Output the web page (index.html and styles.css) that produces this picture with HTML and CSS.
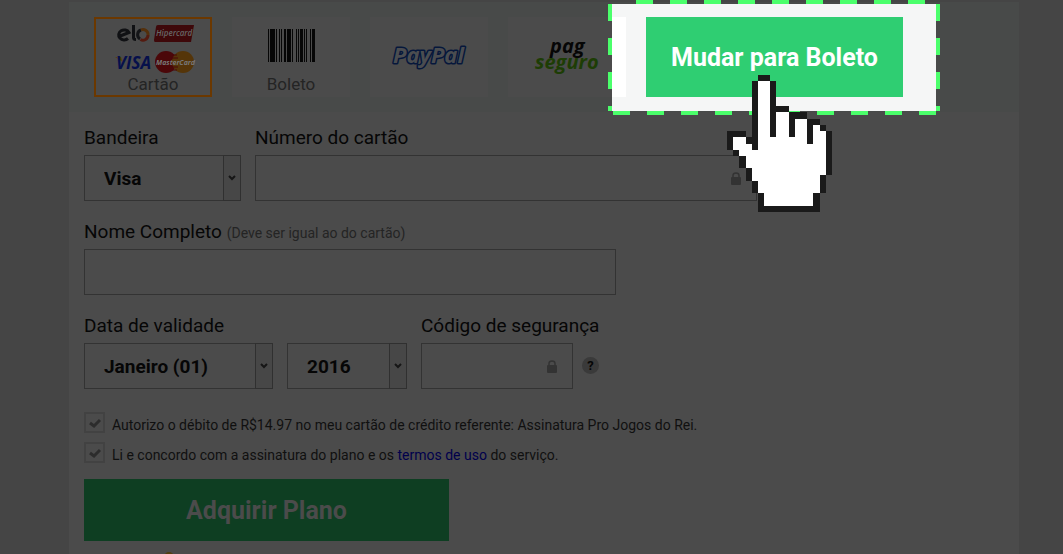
FILE: index.html
```
<!DOCTYPE html>
<html lang="pt-BR">
<head>
<meta charset="utf-8">
<title>Pagamento</title>
<link rel="stylesheet" href="styles.css">
</head>
<body>
<main class="panel">
  <nav class="methods" aria-label="Forma de pagamento">
    <button type="button" class="method method-active">
      <svg class="brands" viewBox="0 0 80 50" aria-hidden="true">
        <g fill="none" stroke-width="3">
          <path d="M4 12.500L14 8.500A5.500 5 0 1 0 13 14.500" stroke="#101114"/>
          <path d="M18.500 1V13.500Q18.500 15.500 21 15.500" stroke="#101114"/>
          <path d="M25 15A5 5 0 0 1 26 6" stroke="#141518"/>
          <path d="M26 6A5 5 0 0 1 33 11" stroke="#54300c"/>
          <path d="M33 11A5 5 0 0 1 25.500 15.500" stroke="#541b10"/>
        </g>
        <path d="M43 1H79L76 18H40Q39 18 39 16L41 3Q41 1 43 1Z" fill="#3e080a"/>
        <text x="41" y="12" class="t-hiper">Hipercard</text>
        <path d="M0 33H6L8 38Z" fill="#58420c"/>
        <text x="1" y="45" class="t-visa">VISA</text>
        <circle cx="51" cy="38" r="11" fill="#4b0709"/>
        <circle cx="68" cy="38" r="11" fill="#553509"/>
        <path d="M57 31H62M56 34H63M56 43H63M57 46H62" stroke="#4b0709"/>
        <text x="41" y="41" class="t-master">MasterCard</text>
      </svg>
      <span>Cartão</span>
    </button>
    <button type="button" class="method">
      <svg class="barcode" viewBox="0 0 47 33" aria-hidden="true">
        <path fill="#060606" d="M0 0h1v33h-1zM2 0h5v33h-5zM8 0h1v33h-1zM11 0h1v33h-1zM13 0h1v33h-1zM16 0h2v33h-2zM19 0h4v33h-4zM24 0h1v33h-1zM28 0h1v33h-1zM30 0h1v33h-1zM32 0h3v33h-3zM36 0h1v33h-1zM38 0h1v33h-1zM42 0h1v33h-1zM44 0h3v33h-3z"/>
      </svg>
      <span>Boleto</span>
    </button>
    <button type="button" class="method" aria-label="PayPal">
      <svg class="paypal" viewBox="0 0 76 28" aria-hidden="true">
        <text x="2" y="20" class="t-paypal">PayPal</text>
      </svg>
    </button>
    <button type="button" class="method" aria-label="PagSeguro">
      <svg class="pagseguro" viewBox="0 0 70 38" aria-hidden="true">
        <text class="t-pag"><tspan x="18" y="15">pag</tspan><tspan x="3" y="31" class="t-seguro">seguro</tspan></text>
      </svg>
    </button>
    <div class="spot">
      <div class="spot-frame"><div class="spot-tile"></div></div>
      <button type="button" class="switch">Mudar para Boleto</button>
      <svg class="hand" viewBox="0 0 17 22" preserveAspectRatio="none" shape-rendering="crispEdges" aria-hidden="true">
        <path fill="#fff" d="M5 1H7V6H10V7H13V8H15V9H16V16H15V19H14V21H6V19H5V17H4V15H3V13H2V12H1V10H3V11H4V12H5Z"/>
        <path fill="#1a1a1a" d="M5 0h2v1h-2zM4 1h1v11h-1zM7 1h1v9h-1zM8 5h2v1h-2zM10 6h3v1h-3zM10 7h1v3h-1zM13 7h2v1h-2zM13 8h1v3h-1zM15 8h1v1h-1zM16 9h1v7h-1zM15 16h1v3h-1zM14 19h1v3h-1zM5 21h9v1h-9zM5 19h1v2h-1zM4 17h1v2h-1zM3 15h1v2h-1zM2 13h1v2h-1zM1 12h1v1h-1zM0 9h1v3h-1zM1 9h2v1h-2zM3 10h1v1h-1z"/>
      </svg>
    </div>
  </nav>

  <form class="form">
    <div class="row">
      <div class="field w-brand">
        <label for="brand">Bandeira</label>
        <div class="control">
          <select id="brand"><option>Visa</option></select>
          <span class="arrow"><svg viewBox="0 0 8 6"><path d="M1 1L4 4L7 1"/></svg></span>
        </div>
      </div>
      <div class="field w-number">
        <label for="number">Número do cartão</label>
        <div class="control">
          <input id="number" type="text">
          <svg class="lock" viewBox="0 0 10 13"><path d="M2 6V3.500A3 2.500 0 0 1 8 3.500V6" fill="none" stroke="#333" stroke-width="1.500"/><rect y="5" width="10" height="8" rx="1" fill="#333"/></svg>
        </div>
      </div>
    </div>
    <div class="row">
      <div class="field w-name">
        <label for="name">Nome Completo <small>(Deve ser igual ao do cartão)</small></label>
        <div class="control"><input id="name" type="text"></div>
      </div>
    </div>
    <div class="row">
      <div class="field w-month">
        <label for="month">Data de validade</label>
        <div class="control">
          <select id="month"><option>Janeiro (01)</option></select>
          <span class="arrow"><svg viewBox="0 0 8 6"><path d="M1 1L4 4L7 1"/></svg></span>
        </div>
      </div>
      <div class="field w-year">
        <div class="control">
          <select id="year" aria-label="Ano"><option>2016</option></select>
          <span class="arrow"><svg viewBox="0 0 8 6"><path d="M1 1L4 4L7 1"/></svg></span>
        </div>
      </div>
      <div class="field w-code">
        <label for="code">Código de segurança</label>
        <div class="control">
          <input id="code" type="text">
          <svg class="lock" viewBox="0 0 10 13"><path d="M2 6V3.500A3 2.500 0 0 1 8 3.500V6" fill="none" stroke="#333" stroke-width="1.500"/><rect y="5" width="10" height="8" rx="1" fill="#333"/></svg>
        </div>
      </div>
      <button type="button" class="help" aria-label="Ajuda">?</button>
    </div>
    <div class="checks">
      <div class="check">
        <span class="box"><input id="auth" type="checkbox" checked><svg viewBox="0 0 12 10"><path d="M1 5L5 8L11 2"/></svg></span>
        <label for="auth">Autorizo o débito de R$14.97 no meu cartão de crédito referente: Assinatura Pro Jogos do Rei.</label>
      </div>
      <div class="check">
        <span class="box"><input id="terms" type="checkbox" checked><svg viewBox="0 0 12 10"><path d="M1 5L5 8L11 2"/></svg></span>
        <label for="terms">Li e concordo com a assinatura do plano e os <a href="#">termos de uso</a> do serviço.</label>
      </div>
    </div>
    <button type="submit" class="submit">Adquirir Plano</button>
    <svg class="seal" viewBox="0 0 10 10" aria-hidden="true"><circle cx="5" cy="5" r="4" fill="none" stroke="#523f12" stroke-width="2"/></svg>
  </form>
</main>
</body>
</html>
```
FILE: styles.css
```
* { box-sizing: border-box; }
html { height: 100%; overflow: hidden; }
body {
  height: 100%;
  margin: 0;
  padding: 2px 44px 0 69px;
  overflow: hidden;
  background: #454545;
  font-family: Roboto, "Noto Sans", sans-serif;
  font-size: 19px;
  color: #060606;
}
button, input, select { font: inherit; color: inherit; margin: 0; border-radius: 0; }
.panel { min-height: 100%; background: #4b4b4b; }
.methods {
  display: flex;
  gap: 20px;
  padding: 15px 25px;
  background: #484a49;
}
.method {
  display: flex;
  flex-direction: column;
  align-items: center;
  justify-content: center;
  flex: none;
  width: 118px;
  height: 80px;
  padding: 0;
  border: 2px solid transparent;
  background: #4b4b4b;
  font-size: 17px;
  line-height: 20px;
  color: #242424;
}
.method-active { border-color: #6b3800; }
.method svg { overflow: visible; }
.brands { width: 80px; height: 50px; margin: 4px 0 0 4px; }
.barcode { width: 47px; height: 33px; margin: 9px 0 12px; }
.paypal { width: 76px; height: 28px; }
.pagseguro { width: 70px; height: 38px; }
.brands text, .paypal text, .pagseguro text { font-family: "Open Sans", sans-serif; font-style: italic; font-weight: 700; }
.brands .t-hiper { font-size: 8px; fill: #666; font-weight: 600; }
.brands .t-visa { font-size: 17px; fill: #06104b; }
.brands .t-master { font-size: 7px; fill: #777; }
.paypal .t-paypal { font-size: 22px; fill: #4b4d50; stroke: #06173b; stroke-width: 3; paint-order: stroke; stroke-linejoin: round; }
.pagseguro .t-pag { font-size: 20px; fill: #060606; }
.pagseguro .t-seguro { fill: #1d3d05; }

.spot { position: relative; flex: none; width: 257px; }
.spot-frame {
  position: absolute;
  inset: -17px -37px -18px -38px;
  padding: 17px 4px 18px;
  background:
    repeating-linear-gradient(90deg, #4bff6b 0 17px, transparent 17px 34px) 28px top / 289px 4px no-repeat,
    repeating-linear-gradient(90deg, #4bff6b 0 17px, transparent 17px 34px) 5px bottom / 323px 4px no-repeat,
    repeating-linear-gradient(#4bff6b 0 17px, transparent 17px 34px) left 4px / 4px 107px no-repeat,
    repeating-linear-gradient(#4bff6b 0 17px, transparent 17px 34px) right 4px / 4px 107px no-repeat;
}
.spot-frame::before { content: ""; position: absolute; inset: 4px; background: #f5f6f6; }
.spot-tile { position: relative; width: 14px; height: 100%; background: #fff; }
.switch {
  position: relative;
  width: 100%;
  height: 80px;
  padding: 0;
  border: 0;
  background: #2fce72;
  color: #fff;
  font-size: 25px;
  font-weight: 700;
}
.hand { position: absolute; left: 81px; top: 58px; width: 105px; height: 137px; }

.form { padding: 12px 15px 0; }
.row { display: flex; align-items: flex-end; gap: 14px; margin-bottom: 17px; }
.field { display: flex; flex-direction: column; }
.field label { height: 31px; line-height: 28px; white-space: nowrap; }
.field small { font-size: 14px; color: #242424; }
.w-brand { width: 157px; }
.w-number { width: 502px; }
.w-name { width: 532px; }
.w-month { width: 189px; }
.w-year { width: 120px; }
.w-code { width: 152px; }
.control { display: grid; height: 46px; }
.control > * { grid-area: 1 / 1; }
.control input, .control select {
  width: 100%;
  height: 46px;
  padding: 0 19px;
  border: 1px solid #333;
  background: transparent;
  appearance: none;
  font-weight: 700;
}
.arrow {
  display: grid;
  place-items: center;
  justify-self: end;
  width: 18px;
  border: 1px solid #303030;
  background: #474747;
  pointer-events: none;
}
.arrow svg { width: 8px; height: 6px; }
.arrow path { fill: none; stroke: #161616; stroke-width: 2; }
.lock { align-self: center; justify-self: end; width: 10px; height: 13px; margin-right: 16px; }
.help {
  align-self: flex-end;
  width: 17px;
  height: 17px;
  margin: 0 0 15px -5px;
  padding: 0;
  border: 0;
  border-radius: 50%;
  background: #3a3a3a;
  font-size: 13px;
  line-height: 17px;
  font-weight: 700;
}
.checks { display: grid; gap: 9px; margin: 23px 0 16px; }
.check { display: flex; align-items: center; gap: 7px; height: 21px; font-size: 14px; color: #101010; }
.check label { padding-top: 4px; white-space: nowrap; }
.check a { color: #00004b; text-decoration: none; }
.box { display: grid; width: 21px; height: 21px; }
.box > * { grid-area: 1 / 1; }
.box input { width: 21px; height: 21px; border: 2px solid #424242; appearance: none; }
.box svg { place-self: center; width: 12px; height: 10px; pointer-events: none; }
.box path { fill: none; stroke: #2c2c2c; stroke-width: 3; }
.submit {
  display: block;
  width: 365px;
  height: 62px;
  padding: 0;
  border: 0;
  background: #0e3e22;
  color: #4b4b4b;
  font-size: 25px;
  font-weight: 700;
}
.seal { display: block; width: 10px; height: 10px; margin: 11px 0 0 80px; }
```
